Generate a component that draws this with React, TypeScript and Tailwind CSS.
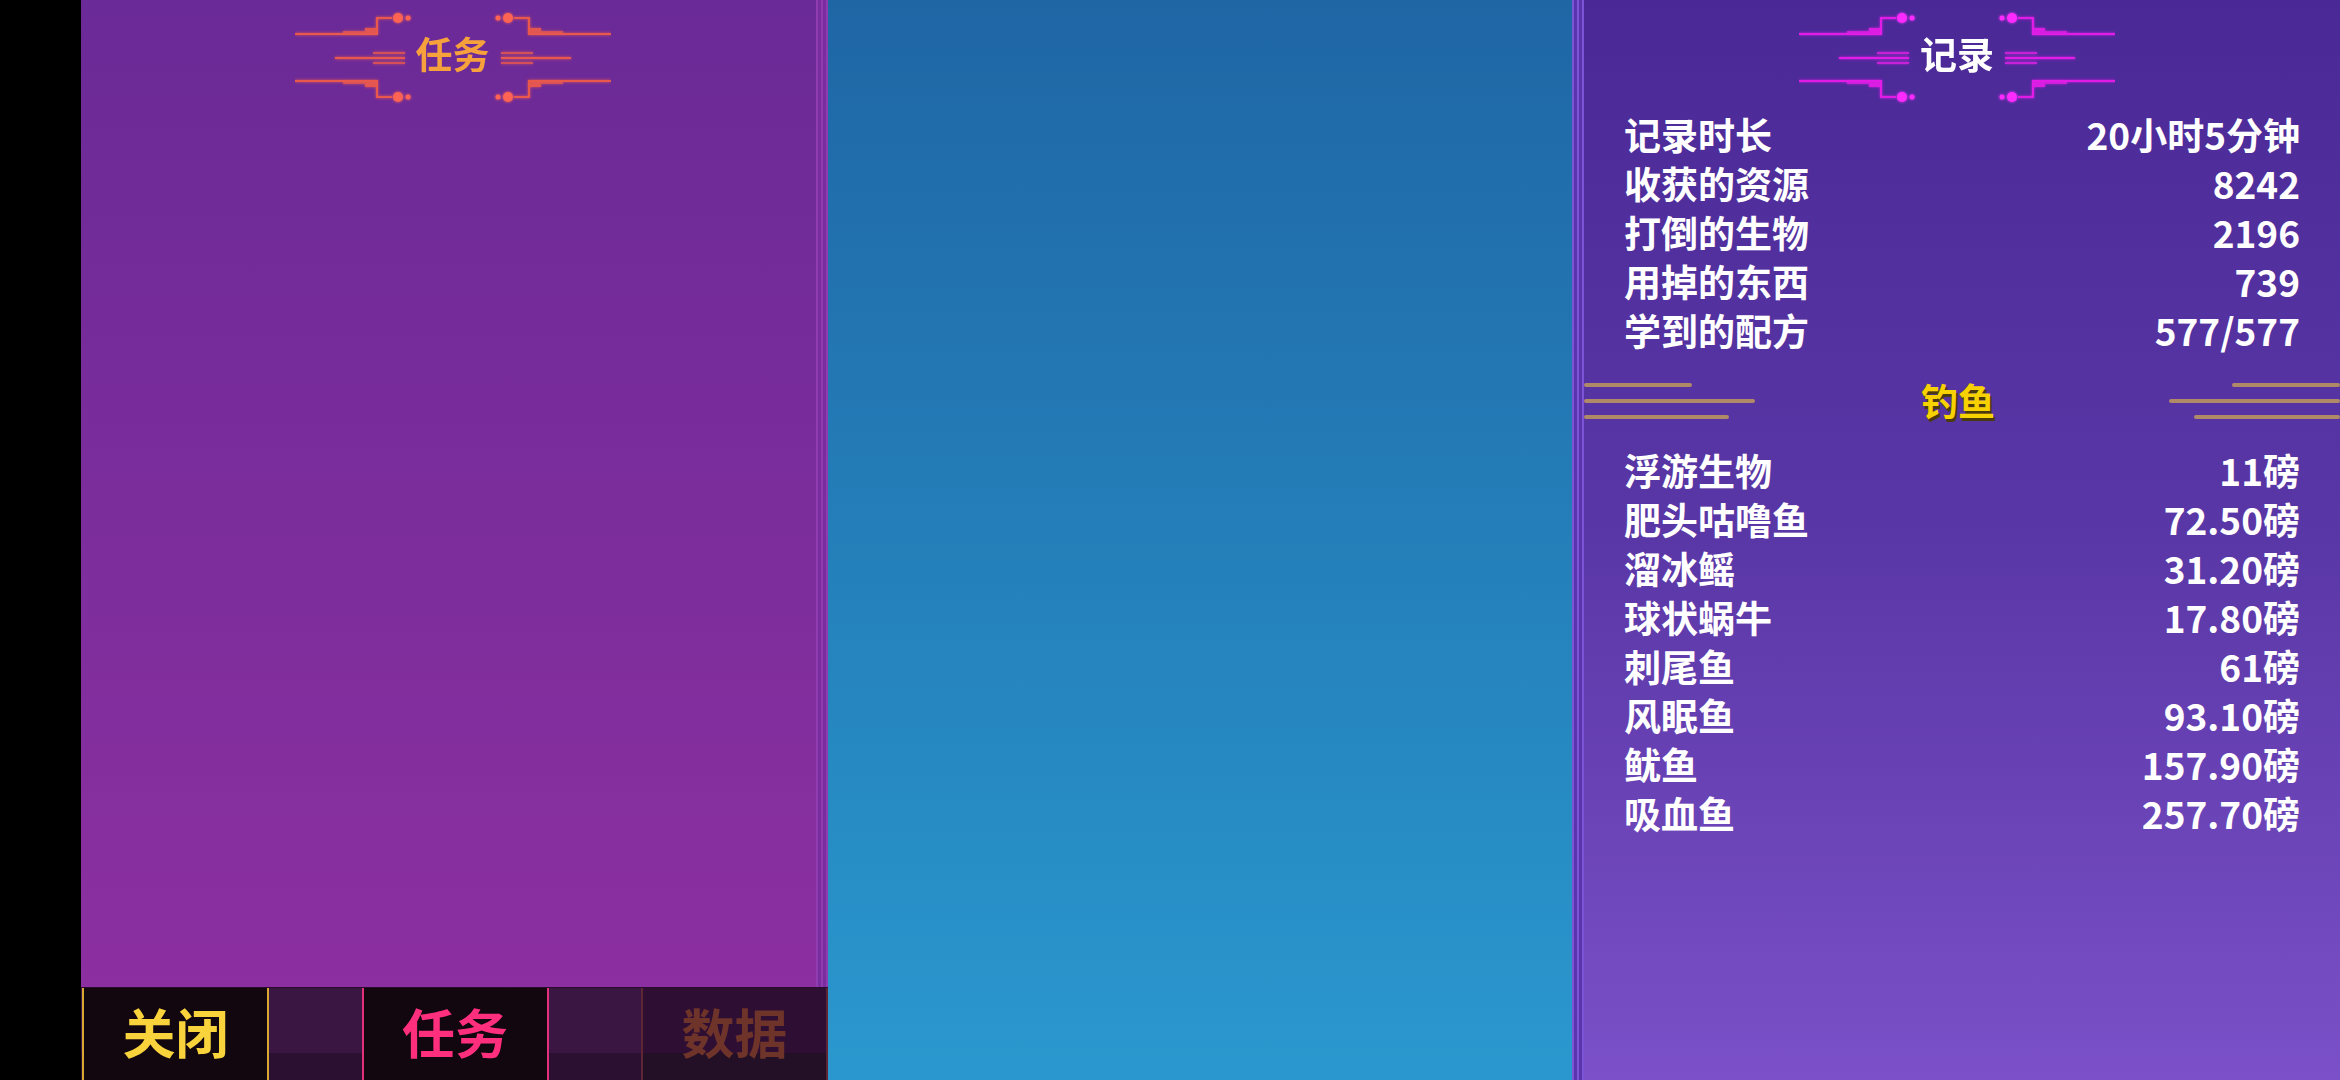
import React from 'react';

type DecoProps = { line: string; dot: string };

// circuit-style ornament drawn around the panel titles
function TitleDeco({ line, dot }: DecoProps) {
  const half = (m: 1 | -1) => {
    const x = (v: number) => (m === 1 ? v : 316 - v);
    const span = (a: number, b: number) => (m === 1 ? [a, b] : [316 - b, 316 - a]);
    const bar = (a: number, b: number, y: number, h: number, o = 1) => {
      const [s, e] = span(a, b);
      return <rect x={s} y={y} width={e - s} height={h} fill={line} opacity={o} />;
    };
    return (
      <g>
        {bar(0, 83, 26, 2)}
        {bar(48, 83, 24, 2, 0.7)}
        {bar(70, 83, 21, 3, 0.9)}
        {bar(0, 83, 73, 2)}
        {bar(48, 83, 75, 2, 0.7)}
        {bar(70, 83, 77, 3, 0.9)}
        <rect x={m === 1 ? 81 : 233} y={10} width={2} height={18} fill={line} />
        <rect x={m === 1 ? 81 : 233} y={73} width={2} height={18} fill={line} />
        {bar(81, 97, 10, 2)}
        {bar(81, 97, 89, 2)}
        <circle cx={x(103)} cy={11} r={5} fill={dot} />
        <circle cx={x(113)} cy={11} r={2.5} fill={dot} />
        <circle cx={x(103)} cy={90} r={5} fill={dot} />
        <circle cx={x(113)} cy={90} r={2.5} fill={dot} />
        {bar(78, 110, 45, 2, 0.75)}
        {bar(40, 110, 50, 2)}
        {bar(78, 110, 55, 2, 0.75)}
      </g>
    );
  };
  return (
    <svg width="316" height="100" viewBox="0 0 316 100" className="absolute left-1/2 top-1/2 -translate-x-1/2 -translate-y-1/2">
      <defs>
        <filter id={`glow-${line.slice(1)}`} x="-10%" y="-20%" width="120%" height="140%">
          <feGaussianBlur stdDeviation="1.6" result="b" />
          <feMerge>
            <feMergeNode in="b" />
            <feMergeNode in="SourceGraphic" />
          </feMerge>
        </filter>
      </defs>
      <g filter={`url(#glow-${line.slice(1)})`}>
        {half(1)}
        {half(-1)}
      </g>
    </svg>
  );
}

function StripesLeft() {
  return (
    <div className="flex h-full w-[12px] shrink-0">
      <div className="w-[2px] bg-[#8f3cae]" />
      <div className="w-[3px] bg-[#7a2da0]" />
      <div className="w-[2px] bg-[#8f3cae]" />
      <div className="w-[3px] bg-[#7a2da0]" />
      <div className="w-[2px] bg-[#8f3cae]" />
    </div>
  );
}

function StripesRight() {
  return (
    <div className="flex h-full w-[12px] shrink-0">
      <div className="w-[2px] bg-[#7c54d6]" />
      <div className="w-[3px] bg-[#5a34ae]" />
      <div className="w-[2px] bg-[#7c54d6]" />
      <div className="w-[3px] bg-[#5a34ae]" />
      <div className="w-[2px] bg-[#7c54d6]" />
    </div>
  );
}

const stats = [
  ['记录时长', '20小时5分钟'],
  ['收获的资源', '8242'],
  ['打倒的生物', '2196'],
  ['用掉的东西', '739'],
  ['学到的配方', '577/577'],
];

const fish = [
  ['浮游生物', '11磅'],
  ['肥头咕噜鱼', '72.50磅'],
  ['溜冰鳐', '31.20磅'],
  ['球状蜗牛', '17.80磅'],
  ['刺尾鱼', '61磅'],
  ['风眠鱼', '93.10磅'],
  ['鱿鱼', '157.90磅'],
  ['吸血鱼', '257.70磅'],
];

function Row({ label, value }: { label: string; value: string }) {
  return (
    <div className="flex h-[49px] items-center justify-between text-[37px] font-bold leading-none text-white">
      <span>{label}</span>
      <span>{value}</span>
    </div>
  );
}

export default function App() {
  return (
    <div className="flex h-[1080px] w-[2340px] overflow-hidden bg-black font-['Noto_Sans_CJK_SC','Noto_Sans',sans-serif]">
      <div className="w-[81px] shrink-0 bg-black" />

      {/* quests panel */}
      <section className="flex w-[747px] shrink-0 flex-col">
        <div className="flex flex-1 bg-gradient-to-b from-[#6a2a97] to-[#8c2fa0]">
          <div className="flex-1 pl-[8px]">
            <div className="relative flex h-[114px] items-center justify-center">
              <TitleDeco line="#e8584e" dot="#ff6352" />
              <span className="relative mb-[7px] text-[37px] font-bold leading-none text-[#f7a13d]">任务</span>
            </div>
          </div>
          <StripesLeft />
        </div>
        <div className="flex h-[93px] justify-between border-t border-[#2a0d2e] bg-[linear-gradient(to_bottom,#3a1642_71%,#2c1032_71%)] pl-[1px]">
          <button className="flex w-[187px] items-center justify-center border-x-2 border-[#d9a832] bg-[#12060f] pb-[6px] text-[53px] font-bold leading-none text-[#f8d33c]">
            关闭
          </button>
          <button className="flex w-[187px] items-center justify-center border-x-2 border-[#e2307a] bg-[#12060f] pb-[6px] text-[53px] font-bold leading-none text-[#ff2f7d]">
            任务
          </button>
          <button className="flex w-[187px] items-center justify-center border-x-2 border-[#5e2634] bg-[linear-gradient(to_bottom,#2f0e34_71%,#231027_71%)] pb-[6px] text-[53px] font-bold leading-none text-[#6e3329]">
            数据
          </button>
        </div>
      </section>

      {/* empty centre panel */}
      <main className="w-[744px] shrink-0 bg-gradient-to-b from-[#1f66a5] to-[#2a98ce]" />

      {/* records panel */}
      <section className="flex flex-1 bg-gradient-to-b from-[#4a2997] via-[#5a37a6] to-[#7b50c8]">
        <StripesRight />
        <div className="flex flex-1 flex-col">
          <div className="pr-[10px] pt-[4px]">
            <div className="relative flex h-[106px] items-center justify-center">
              <TitleDeco line="#e01ee6" dot="#ff2cff" />
              <span className="relative mb-[7px] text-[37px] font-bold leading-none text-white">记录</span>
            </div>
          </div>
          <div className="px-[40px]">
            {stats.map(([l, v]) => (
              <Row key={l} label={l} value={v} />
            ))}
          </div>
          <div className="flex h-[91px] items-center">
            <div className="flex w-[337px] flex-col items-start gap-[12px]">
              <div className="h-[4px] w-[108px] rounded-full bg-[#b08a68]" />
              <div className="h-[4px] w-[171px] rounded-full bg-[#b08a68]" />
              <div className="h-[4px] w-[145px] rounded-full bg-[#b08a68]" />
            </div>
            <span className="text-[37px] font-bold leading-none text-[#f7d200] [text-shadow:2px_3px_0_#4a3a0e]">钓鱼</span>
            <div className="flex flex-1 flex-col items-end gap-[12px]">
              <div className="h-[4px] w-[108px] rounded-full bg-[#b08a68]" />
              <div className="h-[4px] w-[171px] rounded-full bg-[#b08a68]" />
              <div className="h-[4px] w-[146px] rounded-full bg-[#b08a68]" />
            </div>
          </div>
          <div className="px-[40px]">
            {fish.map(([l, v]) => (
              <Row key={l} label={l} value={v} />
            ))}
          </div>
        </div>
      </section>
    </div>
  );
}
